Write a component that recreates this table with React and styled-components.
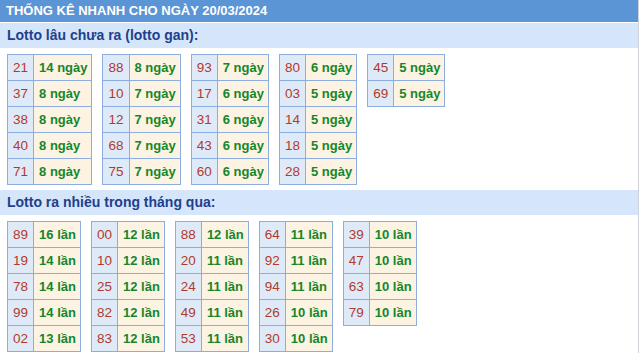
import React from "react";
import styled, { createGlobalStyle } from "styled-components";

const Global = createGlobalStyle`
  html, body { margin: 0; padding: 0; background: #fff; }
  body { font-family: "Liberation Sans", Arial, sans-serif; }
`;

const Wrapper = styled.div`
  width: 639px;
  border-right: 1px solid #cfd4da;
  min-height: 353px;
  box-sizing: border-box;
`;

const Header = styled.div`
  height: 22px;
  line-height: 22px;
  background: #5b95d6;
  color: #fff;
  font-weight: bold;
  font-size: 13px;
  padding-left: 6px;
  margin-bottom: 1px;
  text-transform: uppercase;
`;

const Bar = styled.div`
  height: 25px;
  line-height: 25px;
  background: #d5e6fa;
  color: #213f8c;
  font-weight: bold;
  font-size: 14px;
  padding-left: 7px;
`;

const Tables = styled.div`
  display: flex;
  align-items: flex-start;
  gap: ${(p) => p.$gap}px;
  padding: 6px 7px 5px;
`;

const Table = styled.div`
  display: grid;
  grid-template-columns: auto auto;
  border-top: 1px solid #8cade0;
  border-left: 1px solid #8cade0;
`;

const Cell = styled.div`
  height: 26px;
  line-height: 25px;
  box-sizing: border-box;
  border-right: 1px solid #8cade0;
  border-bottom: 1px solid #8cade0;
  font-size: 13px;
  white-space: nowrap;
`;

const Num = styled(Cell)`
  background: #dfeaf8;
  color: #b23a2c;
  text-align: center;
  font-size: 13.5px;
  padding: 0 5px;
`;

const Val = styled(Cell)`
  background: #fdf3e2;
  color: #15862a;
  font-weight: bold;
  padding: 0 4px 0 5px;
`;

const gan = [
  [["21", 14], ["37", 8], ["38", 8], ["40", 8], ["71", 8]],
  [["88", 8], ["10", 7], ["12", 7], ["68", 7], ["75", 7]],
  [["93", 7], ["17", 6], ["31", 6], ["43", 6], ["60", 6]],
  [["80", 6], ["03", 5], ["14", 5], ["18", 5], ["28", 5]],
  [["45", 5], ["69", 5]],
];

const nhieu = [
  [["89", 16], ["19", 14], ["78", 14], ["99", 14], ["02", 13]],
  [["00", 12], ["10", 12], ["25", 12], ["82", 12], ["83", 12]],
  [["88", 12], ["20", 11], ["24", 11], ["49", 11], ["53", 11]],
  [["64", 11], ["92", 11], ["94", 11], ["26", 10], ["30", 10]],
  [["39", 10], ["47", 10], ["63", 10], ["79", 10]],
];

function Group({ data, unit, gap }) {
  return (
    <Tables $gap={gap}>
      {data.map((t, i) => (
        <Table key={i}>
          {t.map(([n, v]) => (
            <React.Fragment key={n}>
              <Num>{n}</Num>
              <Val>
                {v} {unit}
              </Val>
            </React.Fragment>
          ))}
        </Table>
      ))}
    </Tables>
  );
}

export default function App() {
  return (
    <>
      <Global />
      <Wrapper>
        <Header>THỐNG KÊ NHANH CHO NGÀY 20/03/2024</Header>
        <Bar>Lotto lâu chưa ra (lotto gan):</Bar>
        <Group data={gan} unit="ngày" gap={10} />
        <Bar>Lotto ra nhiều trong tháng qua:</Bar>
        <Group data={nhieu} unit="lần" gap={10} />
      </Wrapper>
    </>
  );
}
